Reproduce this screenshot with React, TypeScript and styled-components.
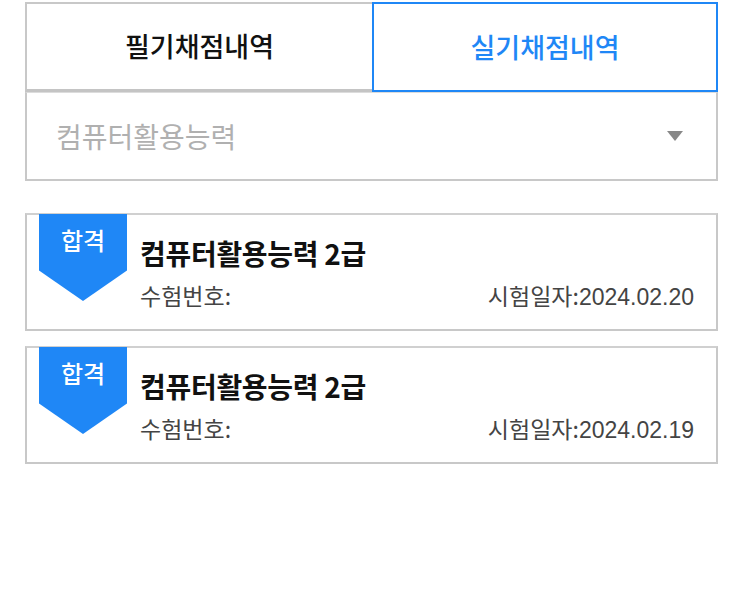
import React from 'react';
import styled, { createGlobalStyle } from 'styled-components';

const BLUE = '#1f87f6';

const GlobalStyle = createGlobalStyle`
  html, body {
    margin: 0;
    padding: 0;
    background: #fff;
  }
  body {
    font-family: 'Noto Sans CJK KR', 'Noto Sans', sans-serif;
  }
`;

const Page = styled.div`
  padding: 2px 25px 0 25px;
  display: flex;
  flex-direction: column;
`;

const Tabs = styled.div`
  display: grid;
  grid-template-columns: 347px 1fr;
  height: 90px;
`;

const Tab = styled.button<{ $active?: boolean }>`
  display: flex;
  align-items: center;
  justify-content: center;
  background: #fff;
  margin: 0;
  padding: 0 0 2px 0;
  font-family: inherit;
  font-size: 27px;
  font-weight: 500;
  color: ${(p) => (p.$active ? BLUE : '#111')};
  border: ${(p) => (p.$active ? `2px solid ${BLUE}` : 'none')};
  border-top: 2px solid ${(p) => (p.$active ? BLUE : '#c8c8c8')};
  border-left: 2px solid ${(p) => (p.$active ? BLUE : '#c8c8c8')};
  border-bottom: ${(p) => (p.$active ? `2px solid ${BLUE}` : '3px solid #c4c4c4')};
  cursor: pointer;
`;

const Select = styled.div`
  display: flex;
  align-items: center;
  justify-content: space-between;
  height: 89px;
  box-sizing: border-box;
  border: 2px solid #c8c8c8;
  border-top: 1px solid #dcdcdc;
  padding: 0 33px 0 29px;
  font-size: 28px;
  color: #b0b0b0;
`;

const Caret = styled.span`
  width: 0;
  height: 0;
  border-left: 8px solid transparent;
  border-right: 8px solid transparent;
  border-top: 10px solid #888;
`;

const List = styled.div`
  display: flex;
  flex-direction: column;
  gap: 15px;
  margin-top: 32px;
`;

const Card = styled.div`
  display: flex;
  align-items: flex-start;
  gap: 13px;
  height: 118px;
  box-sizing: border-box;
  border: 2px solid #c8c8c8;
  border-top: 2px solid #d0d0d0;
  padding-left: 12px;
  padding-right: 22px;
`;

const Badge = styled.div`
  flex: 0 0 88px;
  height: 87px;
  background: ${BLUE};
  clip-path: polygon(0 0, 100% 0, 100% 65%, 50% 100%, 0 65%);
  color: #fff;
  font-size: 24px;
  font-weight: 500;
  text-align: center;
  line-height: 1;
  padding-top: 14px;
  box-sizing: border-box;
  margin-top: -1px;
`;

const Body = styled.div`
  flex: 1;
  display: flex;
  flex-direction: column;
  padding-top: 20px;
`;

const Title = styled.div`
  font-size: 28px;
  font-weight: 700;
  letter-spacing: -0.3px;
  color: #111;
  line-height: 36px;
`;

const Meta = styled.div`
  display: flex;
  justify-content: space-between;
  margin-top: 10px;
  font-size: 23px;
  line-height: 28px;
  color: #444;
`;

const DateText = styled.span`
  font-family: 'Liberation Sans', 'Noto Sans CJK KR', sans-serif;
`;

const DateLabel = styled.span`
  font-family: 'Noto Sans CJK KR', sans-serif;
`;

const results = [
  { title: '컴퓨터활용능력 2급', date: '2024.02.20' },
  { title: '컴퓨터활용능력 2급', date: '2024.02.19' },
];

export default function App() {
  const [tab, setTab] = React.useState(1);
  return (
    <>
      <GlobalStyle />
      <Page>
        <Tabs>
          <Tab $active={tab === 0} onClick={() => setTab(0)}>
            필기채점내역
          </Tab>
          <Tab $active={tab === 1} onClick={() => setTab(1)}>
            실기채점내역
          </Tab>
        </Tabs>
        <Select>
          컴퓨터활용능력
          <Caret />
        </Select>
        <List>
          {results.map((r, i) => (
            <Card key={i}>
              <Badge>합격</Badge>
              <Body>
                <Title>{r.title}</Title>
                <Meta>
                  <span>수험번호:</span>
                  <DateText>
                    <DateLabel>시험일자:</DateLabel>
                    {r.date}
                  </DateText>
                </Meta>
              </Body>
            </Card>
          ))}
        </List>
      </Page>
    </>
  );
}
